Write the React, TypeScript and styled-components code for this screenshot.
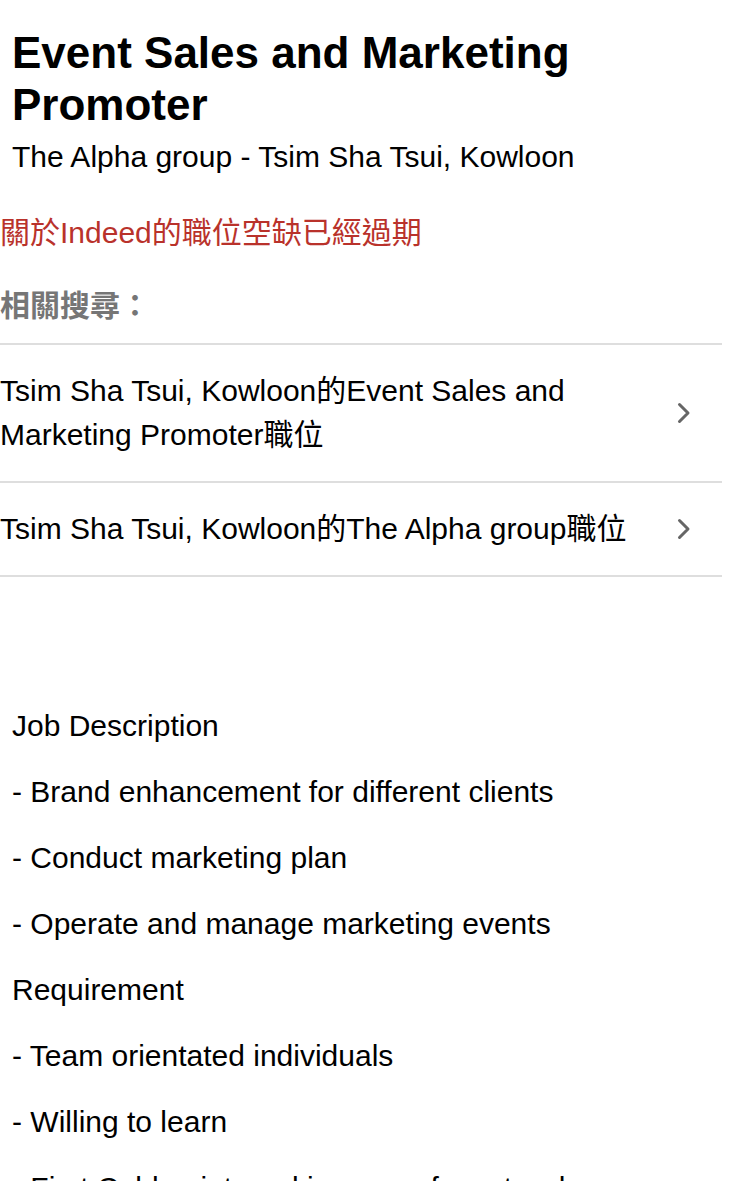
import React from 'react';
import styled, { createGlobalStyle } from 'styled-components';

const GlobalStyle = createGlobalStyle`
  html, body {
    margin: 0;
    padding: 0;
    background: #fff;
  }
  body {
    font-family: "Liberation Sans", Arial, "Noto Sans CJK TC", sans-serif;
    color: #000;
    -webkit-font-smoothing: antialiased;
  }
`;

const relatedSearches = [
  'Tsim Sha Tsui, Kowloon的Event Sales and Marketing Promoter職位',
  'Tsim Sha Tsui, Kowloon的The Alpha group職位',
];

const descriptionLines = [
  'Job Description',
  '- Brand enhancement for different clients',
  '- Conduct marketing plan',
  '- Operate and manage marketing events',
  'Requirement',
  '- Team orientated individuals',
  '- Willing to learn',
  '- First Cold point marking one of most welcome',
];

const ChevronRight: React.FC = () => (
  <Chevron viewBox="0 0 14 22" width={14} height={22} aria-hidden>
    <path d="M2.5 2.5 L11 11 L2.5 19.5" fill="none" stroke="currentColor" strokeWidth="3" strokeLinecap="round" strokeLinejoin="round" />
  </Chevron>
);

const App: React.FC = () => {
  return (
    <Page>
      <GlobalStyle />
      <JobHeader>
        <JobTitle>Event Sales and Marketing Promoter</JobTitle>
        <CompanyLine>The Alpha group - Tsim Sha Tsui, Kowloon</CompanyLine>
      </JobHeader>

      <ExpiredNotice>關於Indeed的職位空缺已經過期</ExpiredNotice>

      <RelatedHeading>相關搜尋：</RelatedHeading>
      <RelatedList>
        {relatedSearches.map((label) => (
          <RelatedRow key={label} href="#">
            <RowText>{label}</RowText>
            <ChevronRight />
          </RelatedRow>
        ))}
      </RelatedList>

      <Description>
        {descriptionLines.map((line, i) => (
          <DescLine key={i}>{line}</DescLine>
        ))}
      </Description>
    </Page>
  );
};

const Page = styled.div`
  width: 750px;
  height: 1181px;
  overflow: hidden;
`;

const JobHeader = styled.header`
  padding: 27px 12px 0;
`;

const JobTitle = styled.h1`
  margin: 0;
  font-size: 44px;
  line-height: 52px;
  font-weight: 700;
  max-width: 600px;
`;

const CompanyLine = styled.div`
  margin-top: 8px;
  font-size: 30px;
  line-height: 36px;
`;

const ExpiredNotice = styled.div`
  margin-top: 40px;
  font-size: 30px;
  line-height: 36px;
  color: #b9322b;
`;

const RelatedHeading = styled.div`
  margin-top: 37px;
  font-size: 30px;
  line-height: 36px;
  font-weight: 700;
  color: #767676;
`;

const RelatedList = styled.nav`
  margin-top: 19px;
  width: 722px;
  border-top: 2px solid #dedede;
`;

const RelatedRow = styled.a`
  display: flex;
  align-items: center;
  padding: 24px 0 24px;
  border-bottom: 2px solid #dedede;
  color: #000;
  text-decoration: none;
`;

const RowText = styled.span`
  flex: 1;
  font-size: 30px;
  line-height: 44px;
  padding-right: 40px;
`;

const Chevron = styled.svg`
  flex: none;
  color: #666;
  margin-right: 31px;
`;

const Description = styled.section`
  margin-top: 131px;
  padding: 0 12px;
`;

const DescLine = styled.p`
  margin: 0 0 30px;
  font-size: 30px;
  line-height: 36px;
  white-space: nowrap;
`;

export default App;
